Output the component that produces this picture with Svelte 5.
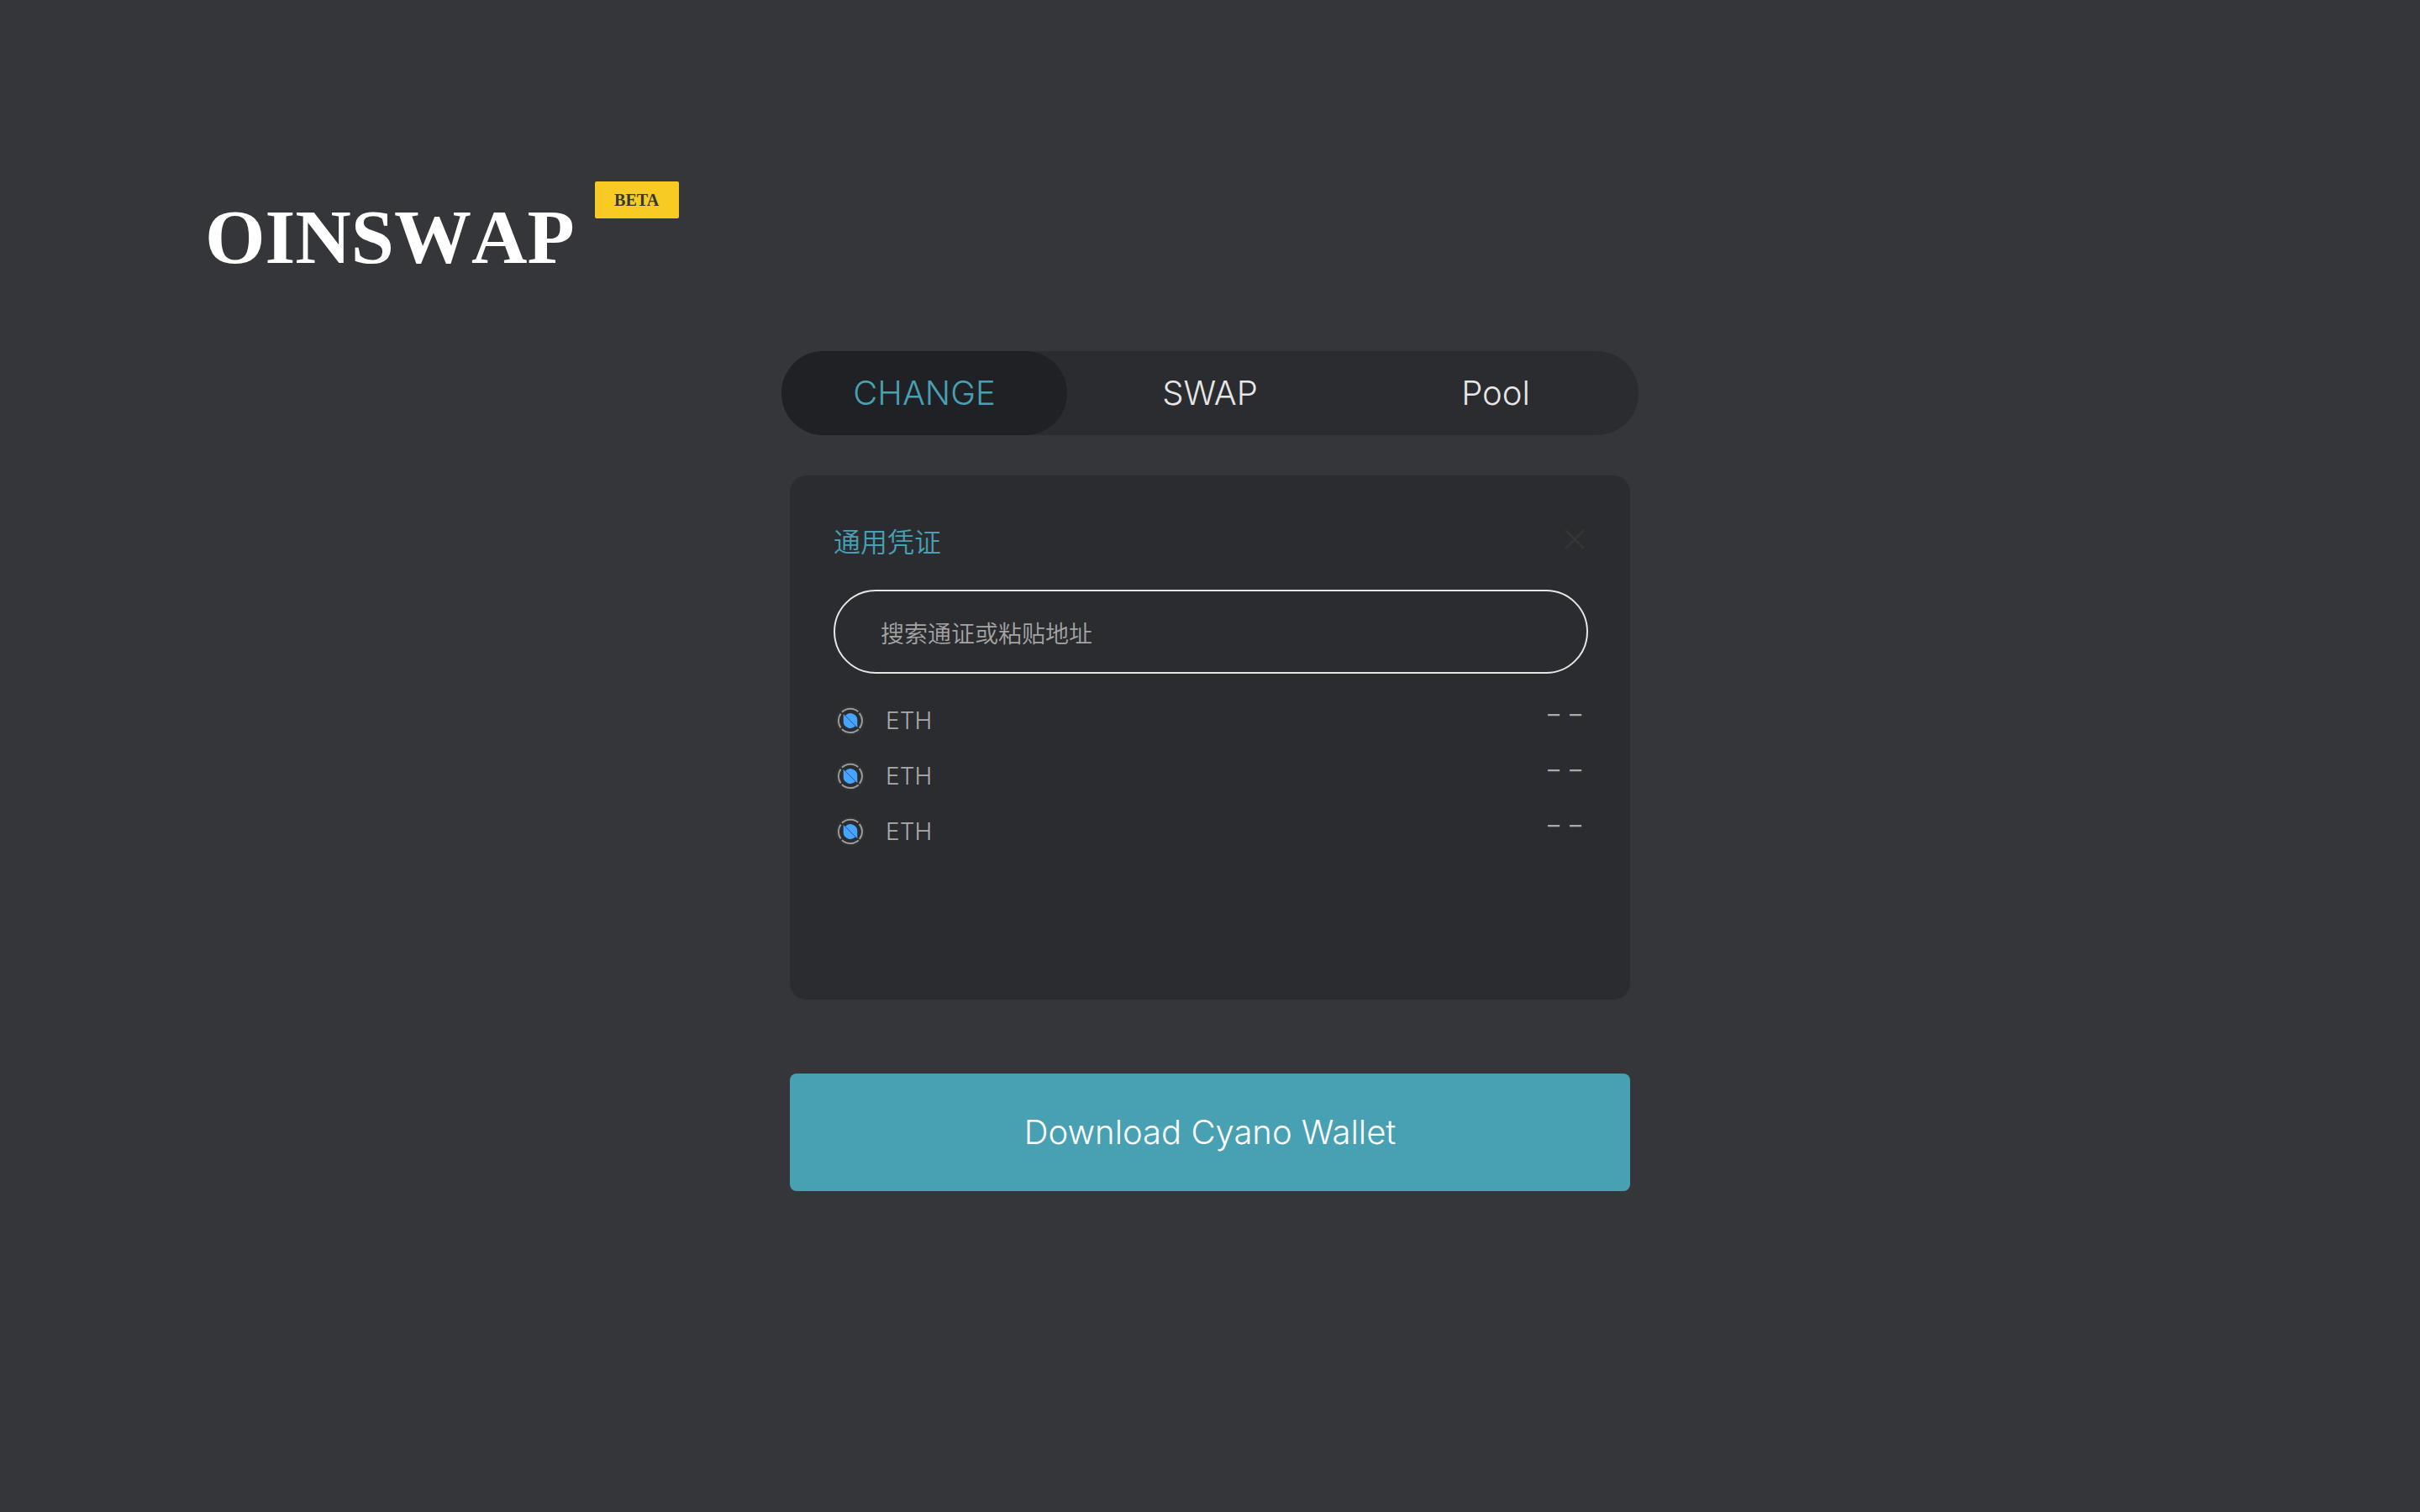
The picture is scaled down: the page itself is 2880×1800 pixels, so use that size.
<script>
  const tabs = ['CHANGE', 'SWAP', 'Pool'];
  const tokens = [
    { id: 1, name: 'ETH' },
    { id: 2, name: 'ETH' },
    { id: 3, name: 'ETH' }
  ];
  let active = $state('CHANGE');
  let query = $state('');
</script>

<div class="page">
  <header>
    <h1>OINSWAP</h1>
    <span class="badge">BETA</span>
  </header>

  <main>
    <nav>
      {#each tabs as tab}
        <button type="button" class="tab" class:active={tab === active} onclick={() => (active = tab)}>{tab}</button>
      {/each}
    </nav>

    <section class="card">
      <div class="heading">
        <h2><label for="token-search">通用凭证</label></h2>
        <button type="button" class="close" aria-label="Close">
          <svg viewBox="0 0 32 32" width="32" height="32" fill="none" stroke="#353535" stroke-width="3" stroke-linecap="round">
            <path d="M6 6 26 26M26 6 6 26" />
          </svg>
        </button>
      </div>
      <input id="token-search" type="text" placeholder="搜索通证或粘贴地址" bind:value={query} />
      <ul>
        {#each tokens as token (token.id)}
          <li>
            <svg viewBox="0 0 36 36" width="36" height="36" aria-hidden="true">
              <circle cx="18" cy="18" r="17.500" fill="#303132" />
              <circle cx="18" cy="18" r="15" fill="#2b2c30" />
              <g fill="none" stroke="#999" stroke-width="2">
                <path d="M8 7.800A14.200 14.200 0 0 1 27.300 7.200" />
                <path d="M28.600 8.800A14.200 14.200 0 0 1 28.800 27" />
                <path d="M27.800 28.200A14.200 14.200 0 0 1 8 28" />
                <path d="M6.600 26.400A14.200 14.200 0 0 1 6.600 9.600" />
              </g>
              <path fill="#48a3ff" d="M9.700 10V18A8.300 8.300 0 0 0 24 24.300z" />
              <path fill="#48a3ff" d="M12 11.800A8.300 8.300 0 0 1 26.300 18V26.300z" />
              <path stroke="#2c5a90" stroke-width="0.700" d="M12 12 25 25.200" />
            </svg>
            <span class="name">{token.name}</span>
            <span class="amount"><span>–</span><span>–</span></span>
          </li>
        {/each}
      </ul>
    </section>

    <button type="button" class="download">Download Cyano Wallet</button>
  </main>
</div>

<style>
  :global(body) {
    background: #35363a;
  }
  .page {
    box-sizing: border-box;
    min-height: 100vh;
    padding: 216px 244px 0;
    background: #35363a;
    font-family: Inter, 'Noto Sans CJK SC', sans-serif;
    font-weight: 300;
  }
  header {
    display: flex;
    align-items: flex-start;
    gap: 24px;
    height: 202px;
    font-family: 'Liberation Serif', serif;
  }
  h1 {
    margin: 14px 0 0;
    font-size: 92px;
    line-height: 104px;
    font-weight: 700;
    font-kerning: none;
    color: #fff;
  }
  .badge {
    width: 100px;
    border-radius: 2px;
    background: #f8cb24;
    color: #35363a;
    font-size: 20px;
    line-height: 44px;
    font-weight: 700;
    text-align: center;
  }
  main {
    max-width: 1020px;
    margin: 0 auto;
  }
  button,
  input {
    margin: 0;
    padding: 0;
    border: 0;
    background: none;
    font: inherit;
  }
  nav {
    display: grid;
    grid-template-columns: repeat(3, 1fr);
    border-radius: 50px;
    background: #2b2c30;
  }
  .tab {
    height: 100px;
    padding-bottom: 2px;
    border-radius: 50px;
    color: #e6e6e6;
    font-size: 40px;
  }
  .tab.active {
    background: #202124;
    color: #48a0b3;
  }
  .card {
    box-sizing: border-box;
    min-height: 624px;
    margin: 48px 10px 0;
    padding: 54px 50px 40px 52px;
    border-radius: 20px;
    background: #2b2c30;
  }
  .heading {
    display: flex;
    justify-content: space-between;
    height: 82px;
  }
  h2 {
    margin: 0;
    color: #48a0b3;
    font-family: 'Noto Sans CJK SC', sans-serif;
    font-size: 32px;
    line-height: 46px;
    font-weight: 350;
  }
  .close {
    width: 32px;
    height: 32px;
    margin-top: 6px;
  }
  .close svg {
    display: block;
  }
  input {
    box-sizing: border-box;
    width: 100%;
    height: 100px;
    padding: 2px 54px 0;
    border: 2px solid #e6e6e6;
    border-radius: 50px;
    color: #e6e6e6;
    font-family: 'Noto Sans CJK SC', sans-serif;
    font-size: 28px;
    font-weight: 350;
  }
  input::placeholder {
    color: #a4a4a4;
    opacity: 1;
  }
  ul {
    margin: 23px 0 0;
    padding: 0 8px 0 2px;
    list-style: none;
  }
  li {
    display: flex;
    align-items: center;
    height: 66px;
    color: #aaa;
    font-size: 28px;
  }
  .name {
    margin-left: 24px;
  }
  .amount {
    display: flex;
    gap: 12px;
    margin: 0 0 16px auto;
    font-weight: 400;
  }
  .download {
    display: block;
    width: calc(100% - 20px);
    height: 140px;
    margin: 88px 10px 0;
    padding-bottom: 2px;
    border-radius: 8px;
    background: #48a0b3;
    color: #fff;
    font-size: 40px;
  }
</style>
